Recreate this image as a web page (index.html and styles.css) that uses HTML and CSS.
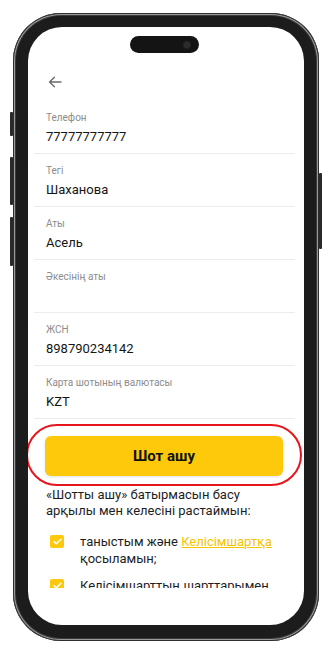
FILE: index.html
```html
<!DOCTYPE html>
<html lang="kk">
<head>
<meta charset="utf-8">
<title>Шот ашу</title>
<link rel="stylesheet" href="styles.css">
</head>
<body>
<div class="phone">
  <span class="btn-side btn-l1"></span>
  <span class="btn-side btn-l2"></span>
  <span class="btn-side btn-l3"></span>
  <span class="btn-side btn-r1"></span>
  <div class="screen">
    <div class="notch"><span class="cam"></span></div>
    <div class="header">
      <svg class="back" width="14" height="12" viewBox="0 0 14 12" fill="none" stroke="#6b6b6b" stroke-width="1.4" stroke-linecap="round" stroke-linejoin="round"><path d="M13 6H1.6M6.4 1.2L1.6 6l4.8 4.8"/></svg>
    </div>
    <div class="scroll">
      <div class="field"><div class="label">Телефон</div><div class="value">77777777777</div></div>
      <div class="field"><div class="label">Тегі</div><div class="value">Шаханова</div></div>
      <div class="field"><div class="label">Аты</div><div class="value">Асель</div></div>
      <div class="field"><div class="label">Әкесінің аты</div><div class="value"></div></div>
      <div class="field"><div class="label">ЖСН</div><div class="value">898790234142</div></div>
      <div class="field"><div class="label">Карта шотының валютасы</div><div class="value">KZT</div></div>
      <div class="btn-wrap">
        <button class="primary">Шот ашу</button>
        <span class="highlight"></span>
      </div>
      <p class="intro">«Шотты ашу» батырмасын басу арқылы мен келесіні растаймын:</p>
      <div class="check">
        <span class="box"><svg width="9" height="7" viewBox="0 0 9 7" fill="none" stroke="#fff" stroke-width="1.5" stroke-linecap="round" stroke-linejoin="round"><path d="M1 3.6l2.3 2.2L8 1.2"/></svg></span>
        <span class="ctext">таныстым және <a class="link" href="#">Келісімшартқа</a> қосыламын;</span>
      </div>
      <div class="check">
        <span class="box"><svg width="9" height="7" viewBox="0 0 9 7" fill="none" stroke="#fff" stroke-width="1.5" stroke-linecap="round" stroke-linejoin="round"><path d="M1 3.6l2.3 2.2L8 1.2"/></svg></span>
        <span class="ctext">Келісімшарттың шарттарымен таныстым;</span>
      </div>
    </div>
  </div>
</div>
</body>
</html>
```

FILE: styles.css
```css
* { box-sizing: border-box; }
html, body { margin: 0; padding: 0; background: #fff; }
body { font-family: Roboto, "Noto Sans", "Liberation Sans", sans-serif; color: #1a1a1a; }

.phone {
  position: relative;
  width: 306px;
  height: 628px;
  margin: 13px 0 0 13px;
  padding: 14px 15px 16px 15px;
  border-radius: 48px;
  background: #1c1c1c;
  box-shadow: inset 0 0 0 1px #2e2e2e, inset 0 0 0 2px #9a9a9a, inset 0 0 0 3px #3a3a3a;
}
.btn-side { position: absolute; width: 3px; background: #2a2a2a; border-radius: 1px; }
.btn-l1 { left: -3px; top: 99px; height: 24px; }
.btn-l2 { left: -3px; top: 144px; height: 48px; }
.btn-l3 { left: -3px; top: 204px; height: 49px; }
.btn-r1 { right: -3px; top: 160px; height: 76px; }

.screen {
  position: relative;
  height: 100%;
  background: #fff;
  border-radius: 34px;
  overflow: hidden;
}
.notch {
  position: absolute;
  top: 9px;
  left: 102px;
  width: 69px;
  height: 17px;
  border-radius: 9px;
  background: #141414;
}
.cam {
  position: absolute;
  top: 6px;
  left: 54px;
  width: 6px;
  height: 6px;
  border-radius: 50%;
  background: #2c2c2c;
  box-shadow: 0 0 0 1px #222;
}

.header { height: 74px; padding: 49px 0 0 20px; }
.back { display: block; }

.scroll { height: 487px; overflow: hidden; padding: 0 9px 0 6px; }

.field {
  height: 53px;
  padding: 11px 0 0 12px;
  border-bottom: 1px solid #ececec;
}
.label { font-size: 10px; line-height: 12px; color: #8c8c8c; margin-bottom: 2px; }
.value { font-size: 13px; line-height: 21px; min-height: 21px; color: #151515; }

.btn-wrap { position: relative; margin: 17px 12px 0 11px; }
.primary {
  display: block;
  width: 238px;
  height: 40px;
  border: 0;
  border-radius: 6px;
  background: #fdc90a;
  box-shadow: 0 1px 3px rgba(0,0,0,0.12);
  font-family: inherit;
  font-size: 15px;
  font-weight: 700;
  color: #111;
}
.highlight {
  position: absolute;
  left: -19px;
  right: -19px;
  top: -12px;
  bottom: -10px;
  border: 2px solid #e8141c;
  border-radius: 32px;
}

.intro {
  margin: 11px 0 0 12px;
  width: 225px;
  font-size: 13px;
  line-height: 16px;
  color: #1e1e1e;
}
.check { display: flex; gap: 16px; margin: 14px 0 0 16px; }
.check + .check { margin-top: 10px; }
.box {
  flex: none;
  width: 14px;
  height: 13px;
  margin-top: 2px;
  border-radius: 2px;
  background: #fdc90a;
  display: flex;
  align-items: center;
  justify-content: center;
}
.ctext { font-size: 13px; line-height: 17px; color: #1e1e1e; width: 205px; }
.link { color: #f5c300; text-decoration: underline; }
```
